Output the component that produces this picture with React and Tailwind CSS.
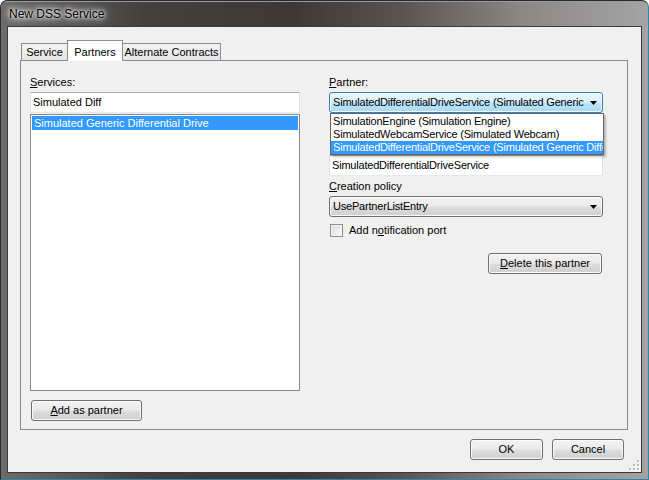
const BTN =
  'h-[21px] rounded-[3px] border border-[#707070] bg-[linear-gradient(#f2f2f2_0%,#ebebeb_48%,#dddddd_52%,#cfcfcf_100%)] shadow-[inset_0_0_0_1px_#fbfbfb] text-[11px] leading-none text-black flex items-center justify-center';

const TEXTBOX =
  'h-[21px] border border-[#abadb3] border-l-[#e2e3ea] border-r-[#dbdfe6] border-b-[#e3e9ef] bg-white flex items-center px-[2px] text-[11px] text-black whitespace-nowrap overflow-hidden';

function Arrow() {
  return (
    <svg width="7" height="4" viewBox="0 0 7 4" className="shrink-0">
      <path d="M0 0h7L3.5 4z" fill="#000" />
    </svg>
  );
}

function U({ children }) {
  return <span className="underline underline-offset-[1px]">{children}</span>;
}

function SizeGrip() {
  const dots = [
    [8, 0],
    [8, 4],
    [4, 4],
    [8, 8],
    [4, 8],
    [0, 8],
  ];
  return (
    <svg width="11" height="11" viewBox="0 0 11 11" className="absolute right-[1px] bottom-[1px]">
      {dots.map(([x, y], i) => (
        <g key={i}>
          <rect x={x + 1} y={y + 1} width="2" height="2" fill="#ffffff" />
          <rect x={x} y={y} width="2" height="2" fill="#b8b8b8" />
        </g>
      ))}
    </svg>
  );
}

function Tab({ label, selected, className = '' }) {
  if (selected) {
    return (
      <div
        className={`relative z-10 h-[21px] -mb-px border border-b-0 border-[#898c95] bg-white flex items-start justify-center pt-[3px] text-[11px] ${className}`}
      >
        {label}
      </div>
    );
  }
  return (
    <div
      className={`h-[17px] border border-b-0 border-[#898c95] bg-[linear-gradient(#f3f3f3,#e5e5e5)] flex items-center justify-center pt-[1px] text-[11px] ${className}`}
    >
      {label}
    </div>
  );
}

export default function App() {
  return (
    <div className="w-[649px] h-[480px] overflow-hidden bg-white font-['Liberation_Sans',Arial,sans-serif] text-black">
      <div className="w-[649px] h-[480px] flex flex-col rounded-t-[7px] border border-[#2a2a2a] border-r-[#2c87a3] border-b-[#2c87a3] bg-[linear-gradient(90deg,#6c6c6c_0%,#444040_22%,#3d3737_45%,#5a5353_62%,#8a8686_80%,#a4a4a4_100%)] px-[6px] pb-[6px] shadow-[inset_0_1px_0_#9a9a9a]">
        {/* Title bar */}
        <div className="h-[25px] shrink-0 flex items-center pl-[2px]">
          <span className="text-[12px] text-black [text-shadow:0_0_6px_#ffffff,0_0_10px_#ffffff,0_0_3px_#ffffff]">
            New DSS Service
          </span>
        </div>

        {/* Client area */}
        <div className="relative flex-1 border border-[#3b3b3b] bg-[#f0f0f0] flex flex-col pt-[13px] pl-[12px] pr-[13px]">
          {/* Tab strip */}
          <div className="h-[20px] flex items-end pl-[1px]">
            <Tab label="Service" className="w-[47px]" />
            <Tab label="Partners" selected className="w-[56px] -ml-px" />
            <Tab label="Alternate Contracts" className="w-[99px] -ml-px" />
          </div>

          {/* Tab panel */}
          <div className="h-[370px] border border-[#898c95] bg-[#f0f0f0] flex pt-[15px] pl-[9px]">
            {/* Left column */}
            <div className="w-[270px] flex flex-col">
              <div className="h-[13px] text-[11px] leading-[13px]">
                <U>S</U>ervices:
              </div>
              <div className={`${TEXTBOX} mt-[3px] h-[20px]`}>Simulated Diff</div>
              <div className="mt-px h-[277px] border border-[#828790] bg-white p-px">
                <div className="h-[14px] bg-[#3399ff] text-white text-[11px] leading-[14px] pl-[2px] whitespace-nowrap">
                  Simulated Generic Differential Drive
                </div>
              </div>
              <div className={`${BTN} mt-[9px] ml-px w-[111px]`}>
                <span>
                  <U>A</U>dd as partner
                </span>
              </div>
            </div>

            {/* Right column */}
            <div className="ml-[29px] w-[274px] flex flex-col">
              <div className="h-[13px] text-[11px] leading-[13px]">
                <U>P</U>artner:
              </div>
              <div className="relative mt-[3px]">
                <div className="h-[21px] rounded-[3px] border border-[#3c7fb1] bg-[linear-gradient(#eaf6fd_0%,#d9f0fc_48%,#bee6fd_52%,#a7d9f5_100%)] shadow-[inset_0_0_0_1px_#f4fbfe] flex items-center pl-[3px] pr-[5px] text-[11px]">
                  <span className="flex-1 whitespace-nowrap tracking-[-0.2px]">
                    SimulatedDifferentialDriveService (Simulated Generic
                  </span>
                  <span className="ml-[4px]">
                    <Arrow />
                  </span>
                </div>

                {/* Space hidden under the open list */}
                <div className="h-[42px]" />
                <div className={`${TEXTBOX} tracking-[-0.2px]`}>SimulatedDifferentialDriveService</div>

                {/* Open drop-down list */}
                <div className="absolute left-px top-[21px] w-[274px] h-[42px] border border-[#646464] bg-white pt-px shadow-[2px_2px_2px_rgba(0,0,0,0.25)] z-20 text-[11px] tracking-[-0.2px]">
                  <div className="h-[13px] leading-[13px] pl-[2px] whitespace-nowrap overflow-hidden">
                    SimulationEngine (Simulation Engine)
                  </div>
                  <div className="h-[13px] leading-[13px] pl-[2px] whitespace-nowrap overflow-hidden">
                    SimulatedWebcamService (Simulated Webcam)
                  </div>
                  <div className="h-[13px] leading-[13px] pl-[2px] whitespace-nowrap overflow-hidden bg-[#3399ff] text-white">
                    SimulatedDifferentialDriveService (Simulated Generic Diffe
                  </div>
                </div>
              </div>

              <div className="h-[13px] mt-[4px] text-[11px] leading-[13px]">
                <U>C</U>reation policy
              </div>
              <div className="mt-[3px] h-[21px] rounded-[3px] border border-[#707070] bg-[linear-gradient(#f2f2f2_0%,#ebebeb_48%,#dddddd_52%,#cfcfcf_100%)] shadow-[inset_0_0_0_1px_#fbfbfb] flex items-center pl-[3px] pr-[5px] text-[11px]">
                <span className="flex-1 tracking-[-0.2px]">UsePartnerListEntry</span>
                <Arrow />
              </div>

              <div className="mt-[7px] h-[13px] flex items-center pl-[1px]">
                <div className="w-[13px] h-[13px] border border-[#8e8f8f] bg-[linear-gradient(135deg,#dcdcdc,#fbfbfb)] shadow-[inset_0_0_0_1px_#f4f4f4]" />
                <span className="ml-[6px] text-[11px] leading-[13px]">
                  Add n<U>o</U>tification port
                </span>
              </div>

              <div className="mt-[16px] flex justify-end pr-px">
                <div className={`${BTN} w-[114px]`}>
                  <span>
                    <U>D</U>elete this partner
                  </span>
                </div>
              </div>
            </div>
          </div>

          {/* Dialog buttons */}
          <div className="mt-[9px] flex justify-end gap-[9px] pr-[4px]">
            <div className={`${BTN} w-[73px] border-[#3c7fb1] shadow-[inset_0_0_0_1px_#c6ecfc]`}>OK</div>
            <div className={`${BTN} w-[72px]`}>Cancel</div>
          </div>

          <SizeGrip />
        </div>
      </div>
    </div>
  );
}
